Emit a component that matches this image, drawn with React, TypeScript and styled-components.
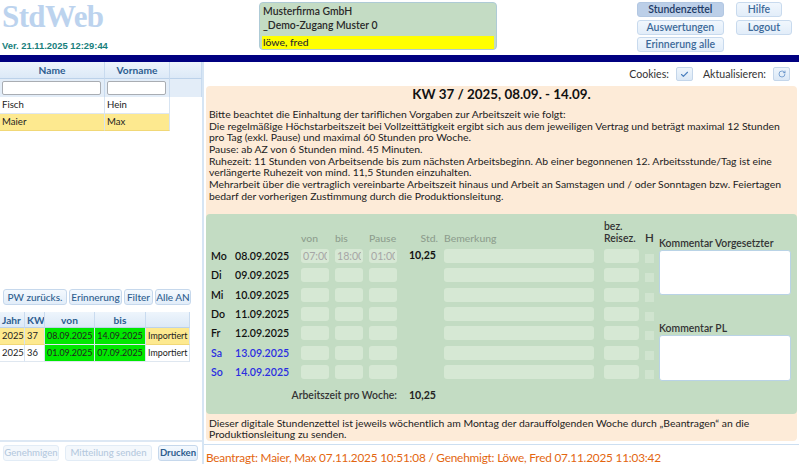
import React from "react";
import styled, { createGlobalStyle } from "styled-components";
import { Check, RotateCw } from "lucide-react";

const GlobalStyle = createGlobalStyle`
  html, body { margin: 0; padding: 0; }
  body {
    width: 799px;
    height: 464px;
    overflow: hidden;
    background: #fff;
    font-family: Lato, "Open Sans", sans-serif;
    color: #222;
  }
  * { box-sizing: border-box; }
`;

const Page = styled.div`
  display: flex;
  flex-direction: column;
  height: 464px;
`;

const Header = styled.header`
  display: flex;
  height: 55px;
`;

const LogoBlock = styled.div`
  width: 259px;
  padding-left: 2px;
  display: flex;
  flex-direction: column;
`;

const Logo = styled.div`
  font-family: "Liberation Serif", serif;
  font-weight: bold;
  font-size: 31px;
  line-height: 34px;
  color: #bcd3ee;
  letter-spacing: -0.6px;
`;

const Version = styled.div`
  margin-top: 6px;
  font-family: "Liberation Sans", Arial, sans-serif;
  font-weight: bold;
  font-size: 9.4px;
  color: #17807c;
`;

const InfoBox = styled.div`
  margin-top: 2px;
  width: 238px;
  height: 48px;
  background: #c4dcc4;
  border: 1px solid #aecbd6;
  border-radius: 4px;
  padding: 1px 2px;
  font-size: 10.4px;
  color: #2a2a2a;
`;

const InfoLine = styled.div<{ $highlight?: boolean }>`
  height: ${({ $highlight }) => ($highlight ? 13 : 14)}px;
  line-height: ${({ $highlight }) => ($highlight ? 13 : 14)}px;
  padding-left: 1px;
  margin-top: ${({ $highlight }) => ($highlight ? 4 : 0)}px;
  background: ${({ $highlight }) => ($highlight ? "#ffff00" : "transparent")};
  font-weight: ${({ $highlight }) => ($highlight ? 500 : 600)};
`;

const NavGrid = styled.div`
  margin-left: auto;
  margin-right: 7px;
  padding-top: 2px;
  display: grid;
  grid-template-columns: 87px auto;
  grid-auto-rows: 15px;
  column-gap: 12px;
  row-gap: 2.5px;
  align-content: start;
  justify-items: start;
`;

const NavButton = styled.button<{ $active?: boolean; $wide?: boolean }>`
  width: ${({ $wide }) => ($wide ? "87px" : "auto")};
  height: 15px;
  padding: ${({ $wide }) => ($wide ? "0" : "0 11px")};
  font-family: inherit;
  font-size: 10.5px;
  font-weight: 600;
  line-height: 13px;
  border-radius: 3px;
  border: 1px solid ${({ $active }) => ($active ? "#b2c7e2" : "#c8daee")};
  background: ${({ $active }) =>
    $active ? "#bccfe8" : "linear-gradient(#f1f7fd, #e2edf9)"};
  color: ${({ $active }) => ($active ? "#1d3a66" : "#3d6a99")};
`;

const NavBar = styled.div`
  height: 7px;
  background: #000080;
`;

const Main = styled.div`
  display: flex;
  flex: 1;
  min-height: 0;
`;

const Sidebar = styled.aside`
  width: 204px;
  border-right: 2px solid #d6e5f4;
  display: flex;
  flex-direction: column;
`;

const PersonArea = styled.div`
  height: 225px;
`;

const PersonTable = styled.div`
  display: grid;
  grid-template-columns: 105px 65px 1fr;
  grid-template-rows: 17px 18px 17px 17px;
`;

const HeadCell = styled.div<{ $align?: string }>`
  background: linear-gradient(#eef5fc, #dce9f7);
  border-right: 1px solid #c9dbef;
  border-bottom: 1px solid #bcd2ea;
  font-size: 10.2px;
  font-weight: 700;
  color: #2c5d90;
  text-align: ${({ $align }) => $align || "center"};
  line-height: 16px;
  padding: 0 2px;
  white-space: nowrap;
  overflow: hidden;
`;

const FilterCell = styled.div`
  background: #e3edf8;
  border-right: 1px solid #c9dbef;
  padding: 2px 3px 2px 2px;
  display: flex;
`;

const FilterInput = styled.input`
  width: 100%;
  height: 14px;
  border: 1px solid #a9adb3;
  border-radius: 2px;
  background: #fff;
  padding: 0;
`;

const DataCell = styled.div<{
  $selected?: boolean;
  $green?: boolean;
  $align?: string;
  $blank?: boolean;
  $size?: number;
}>`
  font-size: ${({ $size }) => $size || 9.6}px;
  line-height: 16px;
  padding: 0 2px;
  color: #222;
  white-space: nowrap;
  overflow: hidden;
  text-align: ${({ $align }) => $align || "left"};
  background: ${({ $selected, $green, $blank }) =>
    $blank ? "#fff" : $green ? "#00e800" : $selected ? "#fde98f" : "#fff"};
  border-right: 1px solid ${({ $blank }) => ($blank ? "transparent" : "#d7e4f2")};
  border-bottom: 1px solid
    ${({ $selected, $blank }) => ($blank ? "transparent" : $selected ? "#f1d877" : "#dfe7f0")};
`;

const ToolRow = styled.div`
  height: 22px;
  padding: 2px 3px;
  display: flex;
  gap: 2px;
  align-items: flex-start;
`;

const SideButton = styled.button<{
  $disabled?: boolean;
  $strong?: boolean;
  $width: number;
  $size?: number;
}>`
  width: ${({ $width }) => $width}px;
  height: 16px;
  padding: 0;
  font-family: inherit;
  font-size: ${({ $size }) => $size || 10}px;
  font-weight: ${({ $strong }) => ($strong ? 700 : 500)};
  line-height: 14px;
  border-radius: 3px;
  border: 1px solid ${({ $disabled }) => ($disabled ? "#e2ecf6" : "#c6d8ec")};
  background: ${({ $disabled }) =>
    $disabled ? "#f4f8fc" : "linear-gradient(#f4f9fe, #e2edf9)"};
  color: ${({ $disabled }) => ($disabled ? "#b5c9de" : "#2d5d8e")};
  white-space: nowrap;
  overflow: hidden;
`;

const WeekTable = styled.div`
  margin-top: 3px;
  width: 190px;
  display: grid;
  grid-template-columns: 25px 20px 50px 51px 44px;
  grid-template-rows: 16px 17px 17px;
`;

const Spacer = styled.div`
  flex: 1;
`;

const BottomBar = styled.div`
  height: 24px;
  border-top: 2px solid #dde8f4;
  padding: 3px 3px 0;
  display: flex;
  gap: 6px;
`;

const Content = styled.section`
  flex: 1;
  display: flex;
  flex-direction: column;
  min-width: 0;
`;

const TopTools = styled.div`
  height: 24px;
  display: flex;
  justify-content: flex-end;
  align-items: center;
  gap: 7px;
  padding-right: 6px;
  font-size: 10.6px;
  color: #333;
`;

const IconButton = styled.button`
  width: 17px;
  height: 14px;
  padding: 0;
  display: flex;
  align-items: center;
  justify-content: center;
  border-radius: 2px;
  border: 1px solid #c4d6ea;
  background: linear-gradient(#eef5fc, #dbe8f6);
  color: #4a7fbe;
  margin-right: 3px;
`;

const Sheet = styled.div`
  margin: 0 2px;
  height: 355px;
  background: #fdebd8;
  border-radius: 4px;
  display: flex;
  flex-direction: column;
`;

const Title = styled.h1`
  margin: 0;
  height: 18px;
  text-align: center;
  font-size: 13.4px;
  font-weight: 700;
  line-height: 17px;
  color: #111;
`;

const Notice = styled.p`
  margin: 5px 0 0;
  padding: 0 3px;
  font-size: 10.4px;
  line-height: 11.7px;
  color: #222;
`;

const GreenPanel = styled.div`
  margin-top: 11px;
  height: 201px;
  background: #c3dcc3;
  border-radius: 4px;
  padding: 8px 5px 0;
  display: flex;
`;

const DayGrid = styled.div`
  display: grid;
  grid-template-columns: 84px 28px 28px 28px 35px 154px 35px 9px;
  grid-template-rows: 22px repeat(7, 14px) 22px;
  column-gap: 6px;
  row-gap: 5.35px;
  align-items: end;
`;

const ColLabel = styled.div<{ $dark?: boolean; $align?: string; $size?: number }>`
  font-size: ${({ $size }) => $size || 10.4}px;
  line-height: 12px;
  color: ${({ $dark }) => ($dark ? "#333" : "#8e9e8e")};
  text-align: ${({ $align }) => $align || "left"};
  white-space: nowrap;
  font-weight: ${({ $dark }) => ($dark ? 600 : 500)};
`;

const DayLabel = styled.div<{ $weekend?: boolean }>`
  font-size: 10.6px;
  font-weight: 600;
  line-height: 14px;
  color: ${({ $weekend }) => ($weekend ? "#2a2ee0" : "#111")};
  white-space: nowrap;
  display: flex;
  align-self: center;
`;

const DayName = styled.span`
  width: 24px;
`;

const Field = styled.input<{ $width?: number }>`
  width: ${({ $width }) => ($width ? `${$width}px` : "100%")};
  height: 14px;
  border: none;
  border-radius: 3px;
  background: #d6e8d4;
  padding: 0 2px;
  font-family: inherit;
  font-size: 10.6px;
  color: #a6a6a6;
  outline: none;
`;

const HourValue = styled.div`
  font-size: 10.6px;
  font-weight: 700;
  line-height: 12px;
  text-align: right;
  color: #111;
  padding-right: 2px;
  align-self: start;
`;

const HBox = styled.div`
  width: 9px;
  height: 9px;
  background: #d0e4cf;
`;

const WeekSum = styled.div`
  grid-column: 1 / 5;
  text-align: right;
  font-size: 10.4px;
  font-weight: 600;
  color: #333;
  line-height: 12px;
  align-self: center;
`;

const WeekValue = styled.div`
  text-align: right;
  padding-right: 2px;
  font-size: 10.6px;
  font-weight: 700;
  color: #222;
  line-height: 12px;
  align-self: center;
`;

const CommentColumn = styled.div`
  margin-left: 5px;
  width: 132px;
  padding-top: 15px;
  display: flex;
  flex-direction: column;
`;

const CommentLabel = styled.div<{ $gap?: number }>`
  margin-top: ${({ $gap }) => $gap || 0}px;
  font-size: 10.4px;
  font-weight: 600;
  line-height: 12px;
  color: #333;
`;

const CommentBox = styled.textarea<{ $height: number }>`
  margin-top: 1px;
  height: ${({ $height }) => $height}px;
  resize: none;
  border: 1px solid #b9d3e6;
  border-radius: 3px;
  background: #fff;
`;

const SheetFooter = styled.p`
  margin: 4px 0 0;
  padding: 0 3px;
  font-size: 10.4px;
  line-height: 11.7px;
  color: #222;
`;

const StatusBar = styled.div`
  margin-top: 3px;
  flex: 1;
  border-top: 1px solid #cddff1;
  padding: 5px 2px 0;
  font-size: 11.8px;
  letter-spacing: -0.2px;
  line-height: 16px;
  color: #e3660f;
  white-space: nowrap;
  overflow: hidden;
`;

type Day = {
  name: string;
  date: string;
  weekend?: boolean;
  von?: string;
  bis?: string;
  pause?: string;
  std?: string;
};

const days: Day[] = [
  { name: "Mo", date: "08.09.2025", von: "07:00", bis: "18:00", pause: "01:00", std: "10,25" },
  { name: "Di", date: "09.09.2025" },
  { name: "Mi", date: "10.09.2025" },
  { name: "Do", date: "11.09.2025" },
  { name: "Fr", date: "12.09.2025" },
  { name: "Sa", date: "13.09.2025", weekend: true },
  { name: "So", date: "14.09.2025", weekend: true },
];

const persons = [
  { name: "Fisch", vorname: "Hein", selected: false },
  { name: "Maier", vorname: "Max", selected: true },
];

const weeks = [
  { jahr: "2025", kw: "37", von: "08.09.2025", bis: "14.09.2025", selected: true },
  { jahr: "2025", kw: "36", von: "01.09.2025", bis: "07.09.2025", selected: false },
];

const App: React.FC = () => {
  return (
    <Page>
      <GlobalStyle />
      <Header>
        <LogoBlock>
          <Logo>StdWeb</Logo>
          <Version>Ver. 21.11.2025 12:29:44</Version>
        </LogoBlock>
        <InfoBox>
          <InfoLine>Musterfirma GmbH</InfoLine>
          <InfoLine>_Demo-Zugang Muster 0</InfoLine>
          <InfoLine $highlight>löwe, fred</InfoLine>
        </InfoBox>
        <NavGrid>
          <NavButton $active $wide>Stundenzettel</NavButton>
          <NavButton>Hilfe</NavButton>
          <NavButton $wide>Auswertungen</NavButton>
          <NavButton>Logout</NavButton>
          <NavButton $wide>Erinnerung alle</NavButton>
        </NavGrid>
      </Header>
      <NavBar />
      <Main>
        <Sidebar>
          <PersonArea>
            <PersonTable>
              <HeadCell>Name</HeadCell>
              <HeadCell>Vorname</HeadCell>
              <HeadCell />
              <FilterCell>
                <FilterInput />
              </FilterCell>
              <FilterCell>
                <FilterInput />
              </FilterCell>
              <FilterCell />
              {persons.map((p) => (
                <React.Fragment key={p.name}>
                  <DataCell $selected={p.selected}>{p.name}</DataCell>
                  <DataCell $selected={p.selected}>{p.vorname}</DataCell>
                  <DataCell $blank />
                </React.Fragment>
              ))}
            </PersonTable>
          </PersonArea>
          <ToolRow>
            <SideButton $width={64}>PW zurücks.</SideButton>
            <SideButton $width={53}>Erinnerung</SideButton>
            <SideButton $width={29}>Filter</SideButton>
            <SideButton $width={36}>Alle AN</SideButton>
          </ToolRow>
          <WeekTable>
            <HeadCell $align="left">Jahr</HeadCell>
            <HeadCell $align="left">KW</HeadCell>
            <HeadCell>von</HeadCell>
            <HeadCell>bis</HeadCell>
            <HeadCell />
            {weeks.map((w) => (
              <React.Fragment key={w.kw}>
                <DataCell $selected={w.selected} $size={9.4}>{w.jahr}</DataCell>
                <DataCell $selected={w.selected} $size={9.4}>{w.kw}</DataCell>
                <DataCell $green $align="center" $size={8.9}>{w.von}</DataCell>
                <DataCell $green $align="center" $size={8.9}>{w.bis}</DataCell>
                <DataCell $selected={w.selected} $size={8.9}>Importiert</DataCell>
              </React.Fragment>
            ))}
          </WeekTable>
          <Spacer />
          <BottomBar>
            <SideButton $disabled $width={56} $size={9.6}>Genehmigen</SideButton>
            <SideButton $disabled $width={87} $size={9.6}>Mitteilung senden</SideButton>
            <SideButton $strong $width={40} $size={9.6}>Drucken</SideButton>
          </BottomBar>
        </Sidebar>
        <Content>
          <TopTools>
            <span>Cookies:</span>
            <IconButton>
              <Check size={9} strokeWidth={3} />
            </IconButton>
            <span>Aktualisieren:</span>
            <IconButton>
              <RotateCw size={8} strokeWidth={2} />
            </IconButton>
          </TopTools>
          <Sheet>
            <Title>KW 37 / 2025, 08.09. - 14.09.</Title>
            <Notice>
              Bitte beachtet die Einhaltung der tariflichen Vorgaben zur Arbeitszeit wie folgt:
              <br />
              Die regelmäßige Höchstarbeitszeit bei Vollzeittätigkeit ergibt sich aus dem jeweiligen
              Vertrag und beträgt maximal 12 Stunden pro Tag (exkl. Pause) und maximal 60 Stunden pro
              Woche.
              <br />
              Pause: ab AZ von 6 Stunden mind. 45 Minuten.
              <br />
              Ruhezeit: 11 Stunden von Arbeitsende bis zum nächsten Arbeitsbeginn. Ab einer begonnenen
              12. Arbeitsstunde/Tag ist eine verlängerte Ruhezeit von mind. 11,5 Stunden einzuhalten.
              <br />
              Mehrarbeit über die vertraglich vereinbarte Arbeitszeit hinaus und Arbeit an Samstagen
              und / oder Sonntagen bzw. Feiertagen bedarf der vorherigen Zustimmung durch die
              Produktionsleitung.
            </Notice>
            <GreenPanel>
              <DayGrid>
                <div />
                <ColLabel>von</ColLabel>
                <ColLabel>bis</ColLabel>
                <ColLabel>Pause</ColLabel>
                <ColLabel $align="right">Std.</ColLabel>
                <ColLabel>Bemerkung</ColLabel>
                <ColLabel $dark>
                  bez.
                  <br />
                  Reisez.
                </ColLabel>
                <ColLabel $dark $size={11.5}>
                  H
                </ColLabel>
                {days.map((d) => (
                  <React.Fragment key={d.date}>
                    <DayLabel $weekend={d.weekend}>
                      <DayName>{d.name}</DayName>
                      {d.date}
                    </DayLabel>
                    <Field defaultValue={d.von} />
                    <Field defaultValue={d.bis} />
                    <Field defaultValue={d.pause} />
                    <HourValue>{d.std}</HourValue>
                    <Field $width={150} />
                    <Field />
                    <HBox />
                  </React.Fragment>
                ))}
                <WeekSum>Arbeitszeit pro Woche:</WeekSum>
                <WeekValue>10,25</WeekValue>
              </DayGrid>
              <CommentColumn>
                <CommentLabel>Kommentar Vorgesetzter</CommentLabel>
                <CommentBox $height={45} />
                <CommentLabel $gap={27}>Kommentar PL</CommentLabel>
                <CommentBox $height={46} />
              </CommentColumn>
            </GreenPanel>
            <SheetFooter>
              Dieser digitale Stundenzettel ist jeweils wöchentlich am Montag der darauffolgenden
              Woche durch „Beantragen“ an die Produktionsleitung zu senden.
            </SheetFooter>
          </Sheet>
          <StatusBar>
            Beantragt: Maier, Max 07.11.2025 10:51:08 / Genehmigt: Löwe, Fred 07.11.2025 11:03:42
          </StatusBar>
        </Content>
      </Main>
    </Page>
  );
};

export default App;
